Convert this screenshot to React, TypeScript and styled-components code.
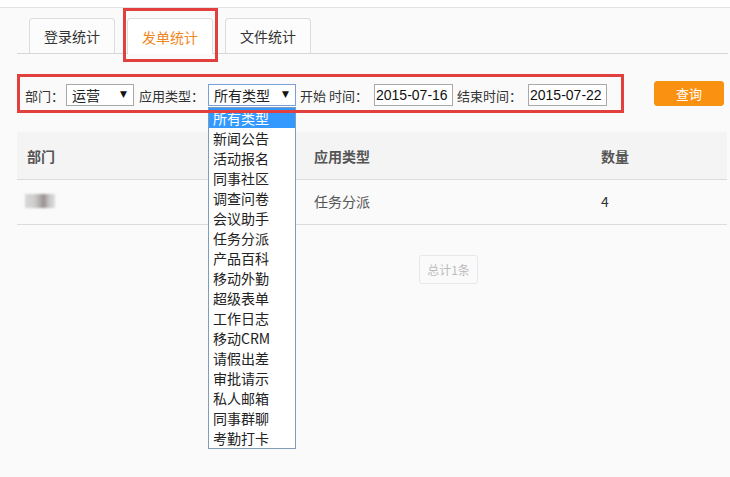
import styled, { createGlobalStyle } from "styled-components"

const GlobalStyle = createGlobalStyle`
  html, body {
    margin: 0;
    padding: 0;
    background: #fafafa;
    font-family: "Liberation Sans", "Noto Sans CJK SC", sans-serif;
    color: #333;
  }
`

const tabs = ["登录统计", "发单统计", "文件统计"]
const appTypes = [
  "所有类型",
  "新闻公告",
  "活动报名",
  "同事社区",
  "调查问卷",
  "会议助手",
  "任务分派",
  "产品百科",
  "移动外勤",
  "超级表单",
  "工作日志",
  "移动CRM",
  "请假出差",
  "审批请示",
  "私人邮箱",
  "同事群聊",
  "考勤打卡",
]

export default function App() {
  return (
    <>
      <GlobalStyle />
      <TopStrip />
      <Page>
        <TabBar>
          {tabs.map((t, i) => (
            <Tab key={t} active={i === 1}>
              {t}
            </Tab>
          ))}
        </TabBar>

        <FilterRow>
          <FilterGroup>
            <Label w={41}>部门：</Label>
            <FakeSelect width={68}>
              运营
              <Arrow>▼</Arrow>
            </FakeSelect>
            <Label w={69} ml={5}>
              应用类型：
            </Label>
            <FakeSelect width={88} focused>
              所有类型
              <Arrow>▼</Arrow>
              <DropList>
                {appTypes.map((a, i) => (
                  <DropItem key={a} selected={i === 0}>
                    {a}
                  </DropItem>
                ))}
              </DropList>
            </FakeSelect>
            <Label w={74} ml={4}>
              开始 时间：
            </Label>
            <DateInput>2015-07-16</DateInput>
            <Label w={71} ml={4}>
              结束时间：
            </Label>
            <DateInput>2015-07-22</DateInput>
          </FilterGroup>
          <QueryButton>查询</QueryButton>
        </FilterRow>

        <Table>
          <HeadRow>
            <Cell>部门</Cell>
            <Cell>应用类型</Cell>
            <Cell>数量</Cell>
          </HeadRow>
          <BodyRow>
            <Cell>
              <Blurred />
            </Cell>
            <Cell>任务分派</Cell>
            <Cell dark>4</Cell>
          </BodyRow>
        </Table>

        <Pager>
          <Total>总计1条</Total>
        </Pager>
      </Page>
    </>
  )
}

const TopStrip = styled.div`
  height: 7px;
  background: #fff;
  border-bottom: 1px solid #e2e2e2;
`

const Page = styled.div`
  padding: 10px 2px 0 17px;
  min-height: 469px;
  box-sizing: border-box;
`

const TabBar = styled.div`
  display: flex;
  gap: 12px;
  padding-left: 12px;
  border-bottom: 1px solid #d6d6d6;
  height: 35px;
`

const Tab = styled.div<{ active?: boolean }>`
  position: relative;
  width: 86px;
  box-sizing: border-box;
  border: 1px solid #dcdcdc;
  border-bottom: none;
  border-radius: 4px 4px 0 0;
  background: ${(p) => (p.active ? "#fff" : "#fcfcfc")};
  color: ${(p) => (p.active ? "#f0861e" : "#333")};
  font-family: "Noto Sans CJK SC", sans-serif;
  font-size: 14px;
  display: flex;
  align-items: center;
  justify-content: center;
  margin-bottom: ${(p) => (p.active ? "-1px" : "0")};
  height: ${(p) => (p.active ? "36px" : "35px")};

  ${(p) =>
    p.active &&
    `
    &::after {
      content: "";
      position: absolute;
      top: -11px;
      left: -5px;
      right: -6px;
      bottom: -8px;
      border: 3px solid #e23f3f;
      z-index: 5;
      pointer-events: none;
    }
  `}
`

const FilterRow = styled.div`
  display: flex;
  align-items: center;
  margin-top: 20px;
  gap: 30px;
`

const FilterGroup = styled.div`
  position: relative;
  display: flex;
  align-items: center;
  width: 607px;
  height: 39px;
  box-sizing: border-box;
  padding: 3px 0 0 8px;
  font-family: "Noto Sans CJK SC", sans-serif;
  font-size: 13px;

  &::after {
    content: "";
    position: absolute;
    inset: 0;
    border: 3px solid #e23f3f;
    z-index: 5;
    pointer-events: none;
  }
`

const Label = styled.span<{ w: number; ml?: number }>`
  flex: none;
  width: ${(p) => p.w}px;
  margin-left: ${(p) => p.ml ?? 0}px;
  color: #333;
  white-space: nowrap;
`

const FakeSelect = styled.div<{ width: number; focused?: boolean }>`
  position: relative;
  flex: none;
  width: ${(p) => p.width}px;
  height: 22px;
  box-sizing: border-box;
  border: 1px solid ${(p) => (p.focused ? "#7a9fd6" : "#a9a9a9")};
  background: #fff;
  font-size: 14px;
  color: #222;
  display: flex;
  align-items: center;
  padding-left: 5px;
`

const Arrow = styled.span`
  position: absolute;
  right: 6px;
  top: 4px;
  font-family: "DejaVu Sans", sans-serif;
  font-size: 9px;
  color: #111;
`

const DropList = styled.div`
  position: absolute;
  top: 22px;
  left: -1px;
  width: 88px;
  box-sizing: border-box;
  border: 1px solid #7f9db9;
  background: #fff;
  z-index: 3;
`

const DropItem = styled.div<{ selected?: boolean }>`
  height: 20px;
  line-height: 20px;
  padding-left: 4px;
  font-size: 14px;
  color: ${(p) => (p.selected ? "#fff" : "#222")};
  background: ${(p) => (p.selected ? "#3399ff" : "#fff")};
  white-space: nowrap;
`

const DateInput = styled.div`
  flex: none;
  width: 79px;
  height: 22px;
  box-sizing: border-box;
  border: 1px solid #a9a9a9;
  background: #fff;
  font-family: "Liberation Sans", sans-serif;
  font-size: 14px;
  color: #111;
  display: flex;
  align-items: center;
  padding-left: 1px;
  white-space: nowrap;
`

const QueryButton = styled.button`
  width: 70px;
  height: 25px;
  border: 1px solid #f39410;
  border-radius: 3px;
  background: #fb9110;
  color: #fff;
  font-family: "Noto Sans CJK SC", sans-serif;
  font-size: 13px;
  padding: 0;
`

const Table = styled.div`
  margin-top: 19px;
  width: 710px;
`

const Row = styled.div`
  display: grid;
  grid-template-columns: 287px 287px 1fr;
  border-bottom: 1px solid #dcdcdc;
  align-items: center;
`

const HeadRow = styled(Row)`
  height: 47px;
  background: #f4f4f4;
  font-weight: bold;
  color: #555;
`

const BodyRow = styled(Row)`
  height: 45px;
  color: #555;
  padding-bottom: 3px;
  box-sizing: border-box;
`

const Cell = styled.div<{ dark?: boolean }>`
  padding-left: 10px;
  font-family: "Noto Sans CJK SC", sans-serif;
  font-size: 14px;
  color: ${(p) => (p.dark ? "#333" : "inherit")};
`

const Blurred = styled.div`
  width: 30px;
  height: 14px;
  margin-left: -2px;
  background: linear-gradient(
    90deg,
    #d8d8d8 0%,
    #cfcfcf 30%,
    #b9b6b6 45%,
    #9b9090 62%,
    #c6c6c6 80%,
    #dedede 100%
  );
  filter: blur(1px);
`

const Pager = styled.div`
  margin-top: 30px;
  padding-left: 402px;
`

const Total = styled.div`
  display: inline-flex;
  align-items: center;
  justify-content: center;
  width: 59px;
  height: 29px;
  box-sizing: border-box;
  border: 1px solid #e8e8e8;
  border-radius: 3px;
  background: #fafafa;
  color: #bcbcbc;
  font-family: "Noto Sans CJK SC", sans-serif;
  font-size: 12px;
`
